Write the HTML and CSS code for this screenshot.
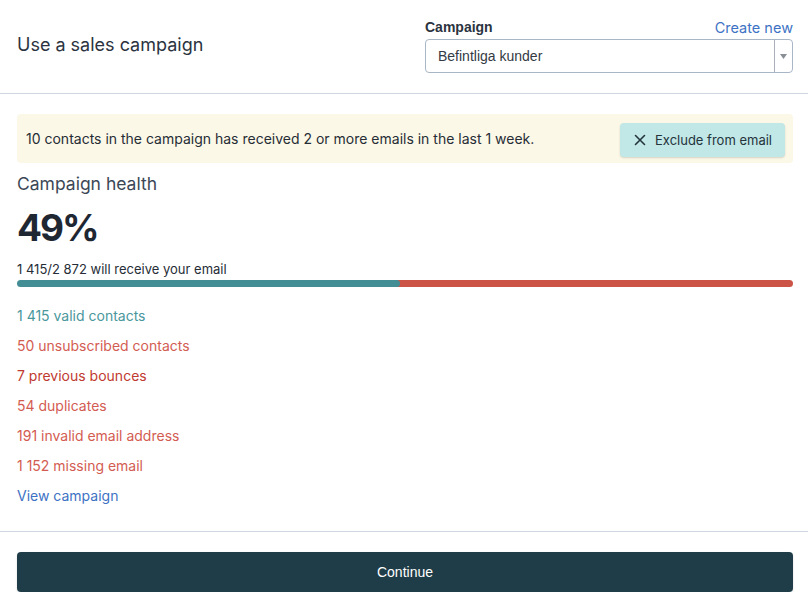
FILE: index.html
```html
<!DOCTYPE html>
<html>
<head>
<meta charset="utf-8">
<link rel="stylesheet" href="styles.css">
</head>
<body>
<div class="page">
  <header class="head">
    <h1 class="title">Use a sales campaign</h1>
    <div class="picker">
      <div class="picker-top">
        <span class="label">Campaign</span>
        <a class="link create">Create new</a>
      </div>
      <div class="select">
        <span class="select-value">Befintliga kunder</span>
        <span class="select-arrow"><svg width="7" height="5" viewBox="0 0 7 5"><path d="M0 0h7L3.5 5z" fill="#8a8f96"/></svg></span>
      </div>
    </div>
  </header>
  <main class="body">
    <div class="alert">
      <span class="alert-text">10 contacts in the campaign has received 2 or more emails in the last 1 week.</span>
      <button class="exclude"><svg width="12" height="12" viewBox="0 0 12 12"><path d="M1.5 1.5l9 9M10.5 1.5l-9 9" stroke="#24343c" stroke-width="1.6" stroke-linecap="round"/></svg><span>Exclude from email</span></button>
    </div>
    <h2 class="health">Campaign health</h2>
    <div class="pct">49%</div>
    <div class="receive">1 415/2 872 will receive your email</div>
    <div class="bar"><div class="bar-ok" style="width:49.3%"></div><div class="bar-bad"></div></div>
    <ul class="stats">
      <li class="ok">1 415 valid contacts</li>
      <li class="bad">50 unsubscribed contacts</li>
      <li class="bad dark">7 previous bounces</li>
      <li class="bad">54 duplicates</li>
      <li class="bad">191 invalid email address</li>
      <li class="bad">1 152 missing email</li>
      <li><a class="link">View campaign</a></li>
    </ul>
  </main>
  <footer class="foot">
    <button class="continue">Continue</button>
  </footer>
</div>
</body>
</html>
```
FILE: styles.css
```css
* { box-sizing: border-box; }
html, body { margin: 0; padding: 0; background: #fff; }
body { font-family: Inter, "Noto Sans", sans-serif; color: #2d3748; }
.page { width: 808px; }
.head {
  height: 94px;
  border-bottom: 1px solid #cfd6df;
  display: flex;
  align-items: flex-start;
  justify-content: space-between;
  padding: 0 15px 0 17px;
}
.title {
  margin: 0;
  margin-top: 33px;
  font-size: 18px;
  font-weight: 400;
  line-height: 24px;
  color: #2b3340;
}
.picker { width: 368px; margin-top: 16px; }
.picker-top { display: flex; justify-content: space-between; align-items: baseline; height: 23px; padding-top: 2px; }
.label { font-family: "Liberation Sans", Arial, sans-serif; font-weight: 700; font-size: 14px; color: #2b3340; }
.link { color: #3d72c4; font-size: 14px; text-decoration: none; cursor: pointer; }
.create { font-size: 14.5px; position: relative; top: 1px; }
.select {
  height: 34px;
  border: 1px solid #a9b6c6;
  border-radius: 4px;
  display: flex;
  align-items: center;
}
.select-value {
  flex: 1;
  padding-left: 12px;
  font-family: "Liberation Sans", Arial, sans-serif;
  font-size: 14px;
  color: #333a44;
}
.select-arrow {
  width: 18px;
  height: 32px;
  border-left: 1px solid #a9b0b8;
  display: flex;
  align-items: center;
  justify-content: center;
}
.body { padding: 20px 15px 0 17px; height: 438px; border-bottom: 1px solid #cfd6df; }
.alert {
  height: 49px;
  background: #fcf8e7;
  border-radius: 4px;
  display: flex;
  align-items: center;
  justify-content: space-between;
  padding: 0 8px 0 9px;
}
.alert-text { font-size: 14px; color: #262d36; }
.exclude {
  height: 34px;
  margin-top: 2px;
  background: #c1e7e6;
  border: none;
  border-radius: 4px;
  box-shadow: 0 1px 2px rgba(0,0,0,0.15);
  display: flex;
  align-items: center;
  gap: 9px;
  padding: 0 13px 0 14px;
  font-family: Inter, sans-serif;
  font-size: 13px;
  color: #24343c;
}
.health {
  margin: 9px 0 0;
  font-size: 17.5px;
  font-weight: 400;
  line-height: 24px;
  color: #3c4756;
}
.pct {
  margin-top: 9px;
  font-size: 37px;
  font-weight: 700;
  line-height: 46px;
  color: #1f2733;
  letter-spacing: -2px;
}
.receive { margin-top: 9px; font-size: 13px; line-height: 18px; color: #262d36; }
.bar { margin-top: 2px; height: 7px; border-radius: 4px; overflow: hidden; display: flex; }
.bar-ok { background: #428e94; border-radius: 0 4px 4px 0; position: relative; z-index: 1; }
.bar-bad { flex: 1; background: #cc5447; margin-left: -4px; }
.stats { list-style: none; margin: 20px 0 0; padding: 0; }
.stats li { height: 30px; line-height: 18px; font-size: 14px; }
.ok { color: #4a979c; }
.bad { color: #d35c52; }
.dark { color: #bf3a31; }
.foot { padding: 20px 15px 0 17px; }
.continue {
  width: 100%;
  height: 40px;
  background: #1f3d48;
  border: none;
  border-radius: 4px;
  box-shadow: 0 1px 2px rgba(0,0,0,0.15);
  color: #fff;
  font-family: "Liberation Sans", Arial, sans-serif;
  font-size: 14px;
}
```
